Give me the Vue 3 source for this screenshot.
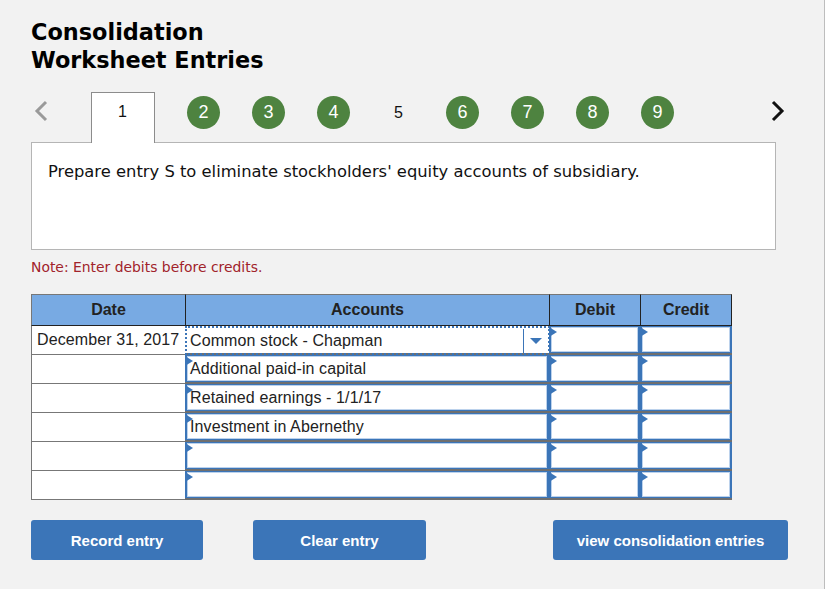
<template>
  <div class="page">
    <h1 class="title">Consolidation<br />Worksheet Entries</h1>

    <div class="steps">
      <svg class="arrow prev" width="14" height="22" viewBox="0 0 14 22">
        <path d="M12 2 3 11l9 9" fill="none" stroke="#9a9a9a" stroke-width="3" />
      </svg>
      <div class="tab">1</div>
      <div class="step-list">
        <div
          v-for="step in steps"
          :key="step.num"
          class="step"
          :class="{ done: step.done }"
        >{{ step.num }}</div>
      </div>
      <svg class="arrow next" width="14" height="22" viewBox="0 0 14 22">
        <path d="M2 2l9 9-9 9" fill="none" stroke="#111" stroke-width="3" />
      </svg>
    </div>

    <div class="panel">Prepare entry S to eliminate stockholders' equity accounts of subsidiary.</div>
    <p class="note">Note: Enter debits before credits.</p>

    <div class="sheet">
      <div class="head">Date</div>
      <div class="head">Accounts</div>
      <div class="head">Debit</div>
      <div class="head">Credit</div>

      <template v-for="(row, index) in rows" :key="index">
        <div class="cell date">{{ row.date }}</div>
        <div v-if="index === 0" class="cell entry">
          <div class="select">
            <span class="select-text">{{ row.account }}</span>
            <span class="select-caret"></span>
          </div>
        </div>
        <div v-else class="cell entry">
          <div class="field">{{ row.account }}</div>
        </div>
        <div class="cell entry"><div class="field"></div></div>
        <div class="cell entry"><div class="field"></div></div>
      </template>
    </div>

    <div class="actions">
      <button class="btn record">Record entry</button>
      <button class="btn clear">Clear entry</button>
      <button class="btn view">view consolidation entries</button>
    </div>
  </div>
</template>

<script setup>
const steps = [
  { num: 2, done: true },
  { num: 3, done: true },
  { num: 4, done: true },
  { num: 5, done: false },
  { num: 6, done: true },
  { num: 7, done: true },
  { num: 8, done: true },
  { num: 9, done: true },
]

const rows = [
  { date: 'December 31, 2017', account: 'Common stock - Chapman' },
  { date: '', account: 'Additional paid-in capital' },
  { date: '', account: 'Retained earnings - 1/1/17' },
  { date: '', account: 'Investment in Abernethy' },
  { date: '', account: '' },
  { date: '', account: '' },
]
</script>

<style>
html,
body {
  background: #fff;
}
</style>

<style scoped>
.page {
  box-sizing: border-box;
  width: 825px;
  height: 589px;
  padding: 18px 0 0 31px;
  background: #f2f2f2;
  border-right: 1px solid #bdbdbd;
  overflow: hidden;
}

.title {
  margin: 0;
  font: bold 22.4px/28px "DejaVu Sans", sans-serif;
  color: #000;
}

.steps {
  display: flex;
  align-items: flex-start;
  margin-top: 18px;
  height: 50px;
  position: relative;
  z-index: 1;
}

.arrow {
  margin-top: 8px;
}

.prev {
  margin-left: 3px;
}

.tab {
  box-sizing: border-box;
  width: 64px;
  height: 51px;
  margin-left: 43px;
  padding: 9px 1px 0 0;
  background: #fff;
  border: 1px solid #8c8c8c;
  border-bottom: none;
  text-align: center;
  font: 16px/20px "Liberation Sans", sans-serif;
  color: #111;
}

.step-list {
  display: flex;
  gap: 32px;
  margin-top: 4px;
  margin-left: 32px;
}

.step {
  width: 33px;
  height: 33px;
  border-radius: 50%;
  text-align: center;
  font: 18px/33px "Liberation Sans", sans-serif;
  color: #111;
}

.step:not(.done) {
  font-size: 16px;
  margin-right: -1px;
}

.step.done {
  background: #4e8340;
  color: #fff;
}

.next {
  margin-left: 97px;
}

.panel {
  box-sizing: border-box;
  width: 745px;
  height: 108px;
  padding: 19px 16px;
  background: #fff;
  border: 1px solid #b5b5b5;
  font: 16.35px/20px "DejaVu Sans", sans-serif;
  color: #111;
}

.note {
  margin: 8px 0 0;
  font: 13.9px/18px "DejaVu Sans", sans-serif;
  color: #a1232b;
}

.sheet {
  display: grid;
  grid-template-columns: 154px 364px 91px 92px;
  grid-template-rows: 32px repeat(6, 29px);
  box-sizing: border-box;
  width: 701px;
  margin-top: 18px;
  font-family: "Liberation Sans", sans-serif;
}

.head {
  box-sizing: border-box;
  border-top: 1px solid #777;
  border-bottom: 1px solid #222;
  border-left: 1px solid #222;
  background: #78aae3;
  text-align: center;
  font: bold 16px/29px "Liberation Sans", sans-serif;
  color: #222;
}

.head:first-child {
  border-left-color: #777;
}

.head:nth-child(4) {
  border-right: 1px solid #222;
}

.cell {
  box-sizing: border-box;
  background: #fff;
  font-size: 16px;
  letter-spacing: 0.1px;
  color: #222;
}

.date {
  border-left: 1px solid #777;
  border-bottom: 1px solid #777;
  padding-left: 5px;
  line-height: 27px;
  white-space: nowrap;
}

.entry {
  position: relative;
  border-bottom: 2px solid #6f6f6f;
  min-width: 0;
}

.field {
  box-sizing: border-box;
  height: 27px;
  border: 1px solid #3b75b8;
  border-left-width: 2px;
  border-right-width: 2px;
  box-shadow: inset 0 0 0 1px #bcd2ec;
  padding-left: 3px;
  line-height: 25px;
  white-space: nowrap;
  position: relative;
}

.field::before {
  content: "";
  position: absolute;
  left: -2px;
  top: 0;
  border-left: 8px solid #3b75b8;
  border-top: 5px solid transparent;
  border-bottom: 5px solid transparent;
}

.select {
  box-sizing: border-box;
  display: flex;
  align-items: center;
  height: 29px;
  margin: 0 -1px -2px 0;
  border: 2px dotted #3b75b8;
  padding-left: 3px;
  white-space: nowrap;
}

.select-text {
  flex: 1;
  line-height: 24px;
  height: 24px;
  margin-top: 1px;
  border-right: 1px solid #3b75b8;
}

.select-caret {
  width: 0;
  height: 0;
  margin: 0 6px;
  border-top: 6px solid #3b75b8;
  border-left: 6px solid transparent;
  border-right: 6px solid transparent;
}

.actions {
  display: flex;
  margin-top: 20px;
}

.btn {
  height: 40px;
  padding: 0;
  background: #3b75b8;
  border: none;
  border-radius: 3px;
  font: bold 15px "Liberation Sans", sans-serif;
  color: #fff;
}

.record {
  width: 172px;
}

.clear {
  width: 173px;
  margin-left: 50px;
}

.view {
  width: 235px;
  margin-left: 127px;
}
</style>
